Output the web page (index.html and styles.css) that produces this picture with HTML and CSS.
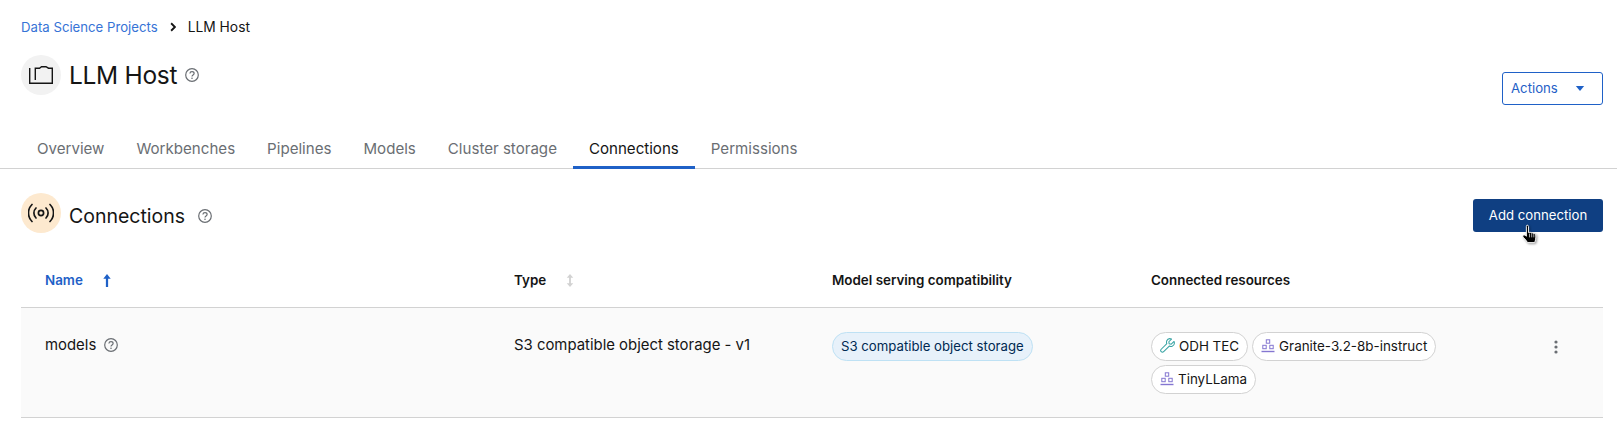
FILE: index.html
```html
<!DOCTYPE html>
<html lang="en">
<head>
    <meta charset="UTF-8">
    <title>LLM Host</title>
    <link rel="stylesheet" href="styles.css">
</head>
<body>
    <div class="page-head">
        <nav class="breadcrumb">
            <a href="#">Data Science Projects</a>
            <svg class="crumb-sep" viewBox="0 0 8 12" width="6" height="10"><path d="M1.500 1l5 5-5 5" fill="none" stroke="#151515" stroke-width="2.400"/></svg>
            <span class="crumb-current">LLM Host</span>
        </nav>
        <div class="title-row">
            <div class="title-left">
                <span class="round-icon grey">
                    <svg viewBox="0 0 24 18" width="24" height="18"><path d="M.7 2V17.300H23.300V2.200H19.500L17 .7H12.500L10.500 2.200H6.300V14" fill="none" stroke="#151515" stroke-width="1.400"/></svg>
                </span>
                <h1>LLM Host</h1>
                <svg class="help help-title" viewBox="0 0 14 14" width="14" height="14"><use href="#help"/></svg>
            </div>
            <button class="btn-actions">Actions<svg viewBox="0 0 10 6" width="10" height="5"><path d="M0 0h10L5 6z" fill="#1f61c7"/></svg></button>
        </div>
    </div>

    <div class="tabs">
        <a class="tab">Overview</a>
        <a class="tab">Workbenches</a>
        <a class="tab">Pipelines</a>
        <a class="tab">Models</a>
        <a class="tab">Cluster storage</a>
        <a class="tab active">Connections</a>
        <a class="tab">Permissions</a>
    </div>

    <section class="section">
        <div class="section-head">
            <div class="title-left">
                <span class="round-icon peach">
                    <svg viewBox="0 0 26 20" width="26" height="20" fill="none" stroke="#151515" stroke-width="1.700" stroke-linecap="round"><circle cx="13" cy="10" r="2.600"/><path d="M8 5a7 7 0 0 0 0 10M18 5a7 7 0 0 1 0 10M4 1.500a12 12 0 0 0 0 17M22 1.500a12 12 0 0 1 0 17"/></svg>
                </span>
                <h2>Connections</h2>
                <svg class="help help-section" viewBox="0 0 14 14" width="14" height="14"><use href="#help"/></svg>
            </div>
            <button class="btn-primary">Add connection</button>
        </div>

        <table class="conn-table">
            <thead>
                <tr>
                    <th class="col-name sorted">Name<svg class="sort" viewBox="0 0 8 14" width="8" height="13"><path d="M4 0L8 5H5.200V14H2.800V5H0z" fill="#1f61c7"/></svg></th>
                    <th class="col-type">Type<svg class="sort" viewBox="0 0 8 14" width="8" height="13"><path d="M4 0L7.500 4H5V10H7.500L4 14 .5 10H3V4H.5z" fill="#d2d2d2"/></svg></th>
                    <th class="col-compat">Model serving compatibility</th>
                    <th class="col-res">Connected resources</th>
                    <th class="col-menu"></th>
                </tr>
            </thead>
            <tbody>
                <tr>
                    <td><span class="text-cell">models<svg class="help" viewBox="0 0 14 14" width="14" height="14"><use href="#help"/></svg></span></td>
                    <td><span class="text-cell">S3 compatible object storage - v1</span></td>
                    <td><span class="label blue">S3 compatible object storage</span></td>
                    <td>
                        <div class="labels">
                            <span class="label">
                                <svg viewBox="0 0 16 16" width="15" height="15" fill="none" stroke="#37a3a3" stroke-width="1.100" stroke-linejoin="round"><path d="M15 3.700L12 6.600 9.800 6.200 9.400 4 12.300 1.100C10.200.3 8 1 7.200 3 6.800 4.100 6.900 5.200 7.300 6.100L1.300 12C.6 12.700.6 13.900 1.300 14.600 2 15.300 3.200 15.300 3.900 14.600L9.900 8.600C10.800 9.100 12 9.200 13 8.800 15 8 15.700 5.800 15 3.700z"/></svg>
                                ODH TEC
                            </span>
                            <span class="label"><svg viewBox="0 0 14 14" width="14" height="14"><use href="#model"/></svg>Granite-3.2-8b-instruct</span>
                            <span class="label"><svg viewBox="0 0 14 14" width="14" height="14"><use href="#model"/></svg>TinyLLama</span>
                        </div>
                    </td>
                    <td class="col-menu">
                        <svg viewBox="0 0 4 14" width="4" height="14"><circle cx="2" cy="2" r="1.600" fill="#6a6e73"/><circle cx="2" cy="7" r="1.600" fill="#6a6e73"/><circle cx="2" cy="12" r="1.600" fill="#6a6e73"/></svg>
                    </td>
                </tr>
            </tbody>
        </table>
    </section>

    <!-- the hand pointer in the screenshot -->
    <svg class="cursor" viewBox="0 0 18 22" width="18" height="21">
        <path d="M5.500 1.500c1-.6 2 0 2 1.200V9l1-.2c1-.2 1.600.1 2 .6 1-.3 1.800 0 2.200.6 1-.2 2 .2 2.300 1.200.3 1.300.2 3.500-.2 5.300-.2 1-.5 2-1 3H6.500C5.500 18 3.500 15.500 2 14c-.8-.8-.6-2 .2-2.400.7-.3 1.600 0 3 1.200V2.700c0-.5 0-1 .3-1.200z" fill="#000" stroke="#fff" stroke-width="1"/>
        <path d="M8.500 10v4M10.800 10v4M13 10.500v3.500" stroke="#fff" stroke-width=".7" fill="none"/>
    </svg>

    <svg class="defs" width="0" height="0">
        <symbol id="help" viewBox="0 0 14 14">
            <circle cx="7" cy="7" r="6.300" fill="none" stroke="#6a6e73" stroke-width="1.200"/>
            <path d="M4.900 5.500C5 4.300 5.900 3.700 7 3.700c1.200 0 2.100.7 2.100 1.800 0 1.500-2.100 1.500-2.100 3" fill="none" stroke="#6a6e73" stroke-width="1.200"/>
            <circle cx="7" cy="10.200" r=".8" fill="#6a6e73"/>
        </symbol>
        <symbol id="model" viewBox="0 0 14 14">
            <g fill="none" stroke="#8476d1" stroke-width="1">
                <rect x="5.300" y=".8" width="3.400" height="3.400"/>
                <rect x="1.800" y="6.300" width="3.400" height="3.400"/>
                <rect x="8.800" y="6.300" width="3.400" height="3.400"/>
            </g>
            <path d="M.5 12.500h13" stroke="#8476d1" stroke-width="1.400"/>
        </symbol>
    </svg>
</body>
</html>
```
FILE: styles.css
```css
html, body {
    margin: 0;
    padding: 0;
    height: 100%;
    overflow: hidden;
    background: #fff;
    color: #151515;
    font-family: 'Inter', 'Open Sans', sans-serif;
    font-size: 13.200px;
}

.page-head {
    padding: 18px 14px 0 21px;
}

.breadcrumb {
    display: flex;
    align-items: center;
    gap: 12px;
    height: 18px;
}

.breadcrumb a {
    color: #3673d6;
    text-decoration: none;
}

.crumb-current {
    font-size: 13.800px;
}

.title-row {
    display: flex;
    justify-content: space-between;
    margin-top: 19px;
}

.title-left {
    display: flex;
    align-items: center;
    align-self: flex-start;
}

.round-icon {
    width: 40px;
    height: 40px;
    border-radius: 50%;
    display: flex;
    align-items: center;
    justify-content: center;
    flex-shrink: 0;
}

.round-icon.grey { background: #f2f2f2; }
.round-icon.peach { background: #fde9cf; }

h1 {
    margin: 0 0 0 8px;
    font-size: 24.500px;
    font-weight: 400;
    letter-spacing: -0.3px;
}

h2 {
    margin: 6px 0 0 8px;
    font-size: 19.500px;
    font-weight: 400;
}

.help {
    margin-left: 8px;
    flex-shrink: 0;
}

.help-section {
    margin-left: 13px;
    margin-top: 6px;
}

.btn-actions {
    width: 101px;
    height: 33px;
    margin-top: 17px;
    display: flex;
    align-items: center;
    justify-content: space-between;
    padding: 0 17px 1px 8px;
    font: inherit;
    color: #1f61c7;
    background: #fff;
    border: 1px solid #1f61c7;
    border-radius: 3px;
}

.tabs {
    display: flex;
    height: 38px;
    margin-top: 25px;
    padding-left: 21px;
    border-bottom: 1px solid #d2d2d2;
}

.tab {
    padding: 1px 16px 0;
    margin-bottom: -1px;
    display: flex;
    align-items: center;
    font-size: 15.100px;
    color: #6a6e73;
    border-bottom: 3px solid transparent;
}

.tab.active {
    color: #151515;
    border-bottom-color: #1f61c7;
}

.section {
    padding: 0 14px 0 21px;
}

.section-head {
    display: flex;
    align-items: flex-start;
    justify-content: space-between;
    padding-top: 24px;
}

.btn-primary {
    width: 130px;
    height: 33px;
    margin-top: 6px;
    padding: 0 0 2px;
    font: inherit;
    color: #fff;
    background: #0f3f82;
    border: none;
    border-radius: 3px;
}

.conn-table {
    width: 100%;
    margin-top: 22px;
    border-collapse: collapse;
    table-layout: fixed;
}

.conn-table th {
    height: 52px;
    padding: 0 0 1px 24px;
    box-sizing: border-box;
    text-align: left;
    font-size: 13.400px;
    font-weight: 600;
    border-bottom: 1px solid #d2d2d2;
}

.conn-table th.sorted { color: #1f61c7; }
.col-name { width: 469px; }
.col-type { width: 318px; }
.col-compat { width: 319px; }
.conn-table th.col-menu, .col-menu { width: 94px; }

.sort {
    margin-left: 20px;
    vertical-align: -2px;
}

.conn-table tbody tr {
    background: #fafafa;
    border-bottom: 1px solid #d2d2d2;
}

.conn-table td {
    height: 110px;
    padding: 24px 0 0 24px;
    box-sizing: border-box;
    vertical-align: top;
    font-size: 14.900px;
}

.text-cell {
    display: flex;
    align-items: center;
    height: 27px;
}

.labels {
    display: flex;
    flex-wrap: wrap;
    gap: 4px;
}

.label {
    display: inline-flex;
    align-items: center;
    gap: 4px;
    height: 29px;
    padding: 0 8px 1px;
    box-sizing: border-box;
    font-size: 13.400px;
    white-space: nowrap;
    background: #fff;
    border: 1px solid #d2d2d2;
    border-radius: 15px;
}

.label.blue {
    font-size: 13.200px;
    background: #e7f1fa;
    border-color: #bee1f4;
    color: #002952;
}

td.col-menu {
    padding-left: 0;
    padding-top: 32px;
    text-align: center;
}

.cursor {
    position: absolute;
    left: 1521px;
    top: 224px;
    filter: drop-shadow(1px 1px 1px rgba(0, 0, 0, 0.4));
}

.defs {
    position: absolute;
}
```
